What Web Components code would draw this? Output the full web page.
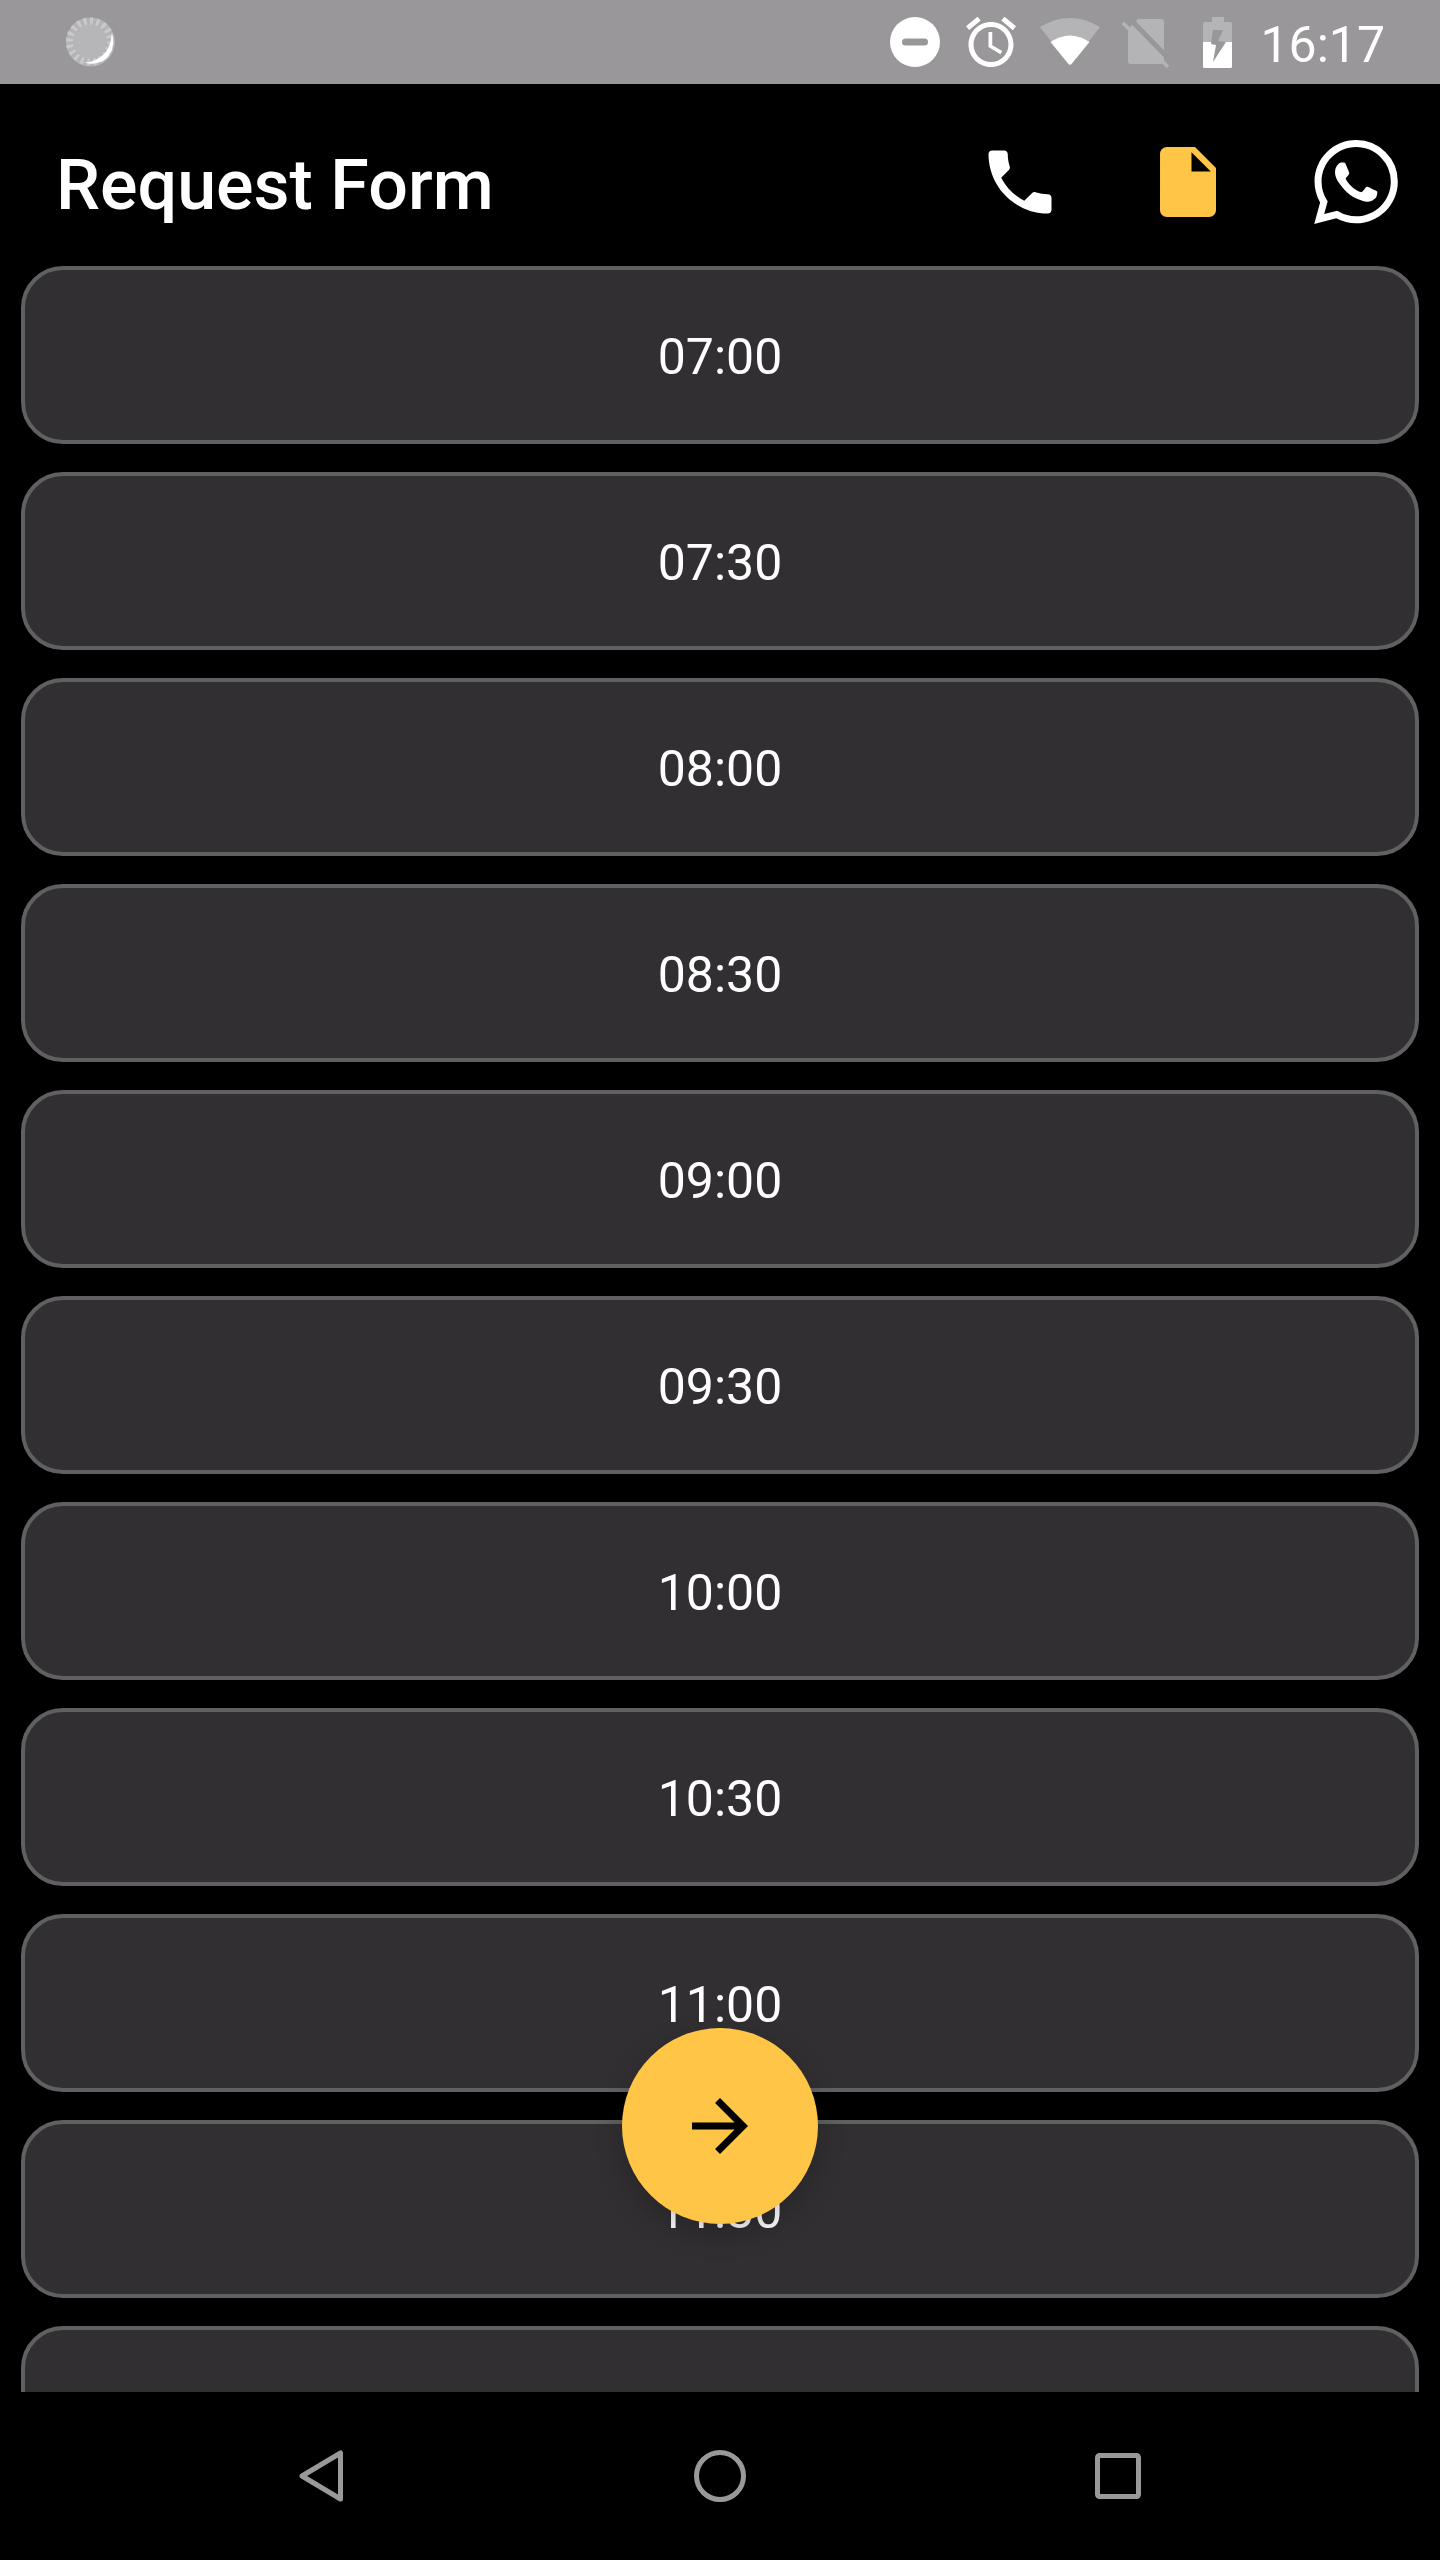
<!DOCTYPE html>
<html lang="en">
<head>
<meta charset="utf-8">
<title>Request Form</title>
<style>
html, body { margin: 0; background: #000; }
body { font-family: Roboto, "Liberation Sans", sans-serif; color: #fff; }
</style>
</head>
<body>
<request-form-screen>
  <status-strip slot="status" time="16:17"></status-strip>
  <form-header slot="header" label="Request Form">
    <header-action icon="phone" color="#fff"></header-action>
    <header-action icon="file" color="#ffc547"></header-action>
    <header-action icon="whatsapp" color="#fff"></header-action>
  </form-header>
  <time-list slot="list">
    <time-option>07:00</time-option>
    <time-option>07:30</time-option>
    <time-option>08:00</time-option>
    <time-option>08:30</time-option>
    <time-option>09:00</time-option>
    <time-option>09:30</time-option>
    <time-option>10:00</time-option>
    <time-option>10:30</time-option>
    <time-option>11:00</time-option>
    <time-option>11:30</time-option>
    <!-- next row: only its top edge is on screen, label is below the fold -->
    <time-option></time-option>
  </time-list>
  <next-fab slot="fab"></next-fab>
  <system-nav slot="nav"></system-nav>
</request-form-screen>

<script>
const ICONS = {
  phone: '<path d="M6.62 10.79c1.44 2.83 3.76 5.14 6.59 6.59l2.2-2.2c.27-.27.67-.36 1.02-.24 1.12.37 2.33.57 3.57.57.55 0 1 .45 1 1V20c0 .55-.45 1-1 1-9.39 0-17-7.61-17-17 0-.55.45-1 1-1h3.5c.55 0 1 .45 1 1 0 1.25.2 2.45.57 3.57.11.35.03.74-.25 1.02l-2.2 2.2z"/>',
  file: '<path d="M6 2c-1.1 0-1.99.9-1.99 2L4 20c0 1.1.89 2 1.99 2H18c1.1 0 2-.9 2-2V8l-6-6H6zm7 7V3.5L18.5 9H13z"/>',
  whatsapp: '<path d="M17.472 14.382c-.297-.149-1.758-.867-2.03-.967-.273-.099-.471-.148-.67.15-.197.297-.767.966-.94 1.164-.173.199-.347.223-.644.075-.297-.15-1.255-.463-2.39-1.475-.883-.788-1.48-1.761-1.653-2.059-.173-.297-.018-.458.13-.606.134-.133.298-.347.446-.52.149-.174.198-.298.298-.497.099-.198.05-.371-.025-.52-.075-.149-.669-1.612-.916-2.207-.242-.579-.487-.5-.669-.51-.173-.008-.371-.01-.57-.01-.198 0-.52.074-.792.372-.272.297-1.04 1.016-1.04 2.479 0 1.462 1.065 2.875 1.213 3.074.149.198 2.096 3.2 5.077 4.487.709.306 1.262.489 1.694.625.712.227 1.36.195 1.871.118.571-.085 1.758-.719 2.006-1.413.248-.694.248-1.289.173-1.413-.074-.124-.272-.198-.57-.347m-5.421 7.403h-.004a9.87 9.87 0 01-5.031-1.378l-.361-.214-3.741.982.998-3.648-.235-.374a9.86 9.86 0 01-1.51-5.26c.001-5.45 4.436-9.884 9.888-9.884 2.64 0 5.122 1.03 6.988 2.898a9.825 9.825 0 012.893 6.994c-.003 5.45-4.437 9.884-9.885 9.884m8.413-18.297A11.815 11.815 0 0012.05 0C5.495 0 .16 5.335.157 11.892c0 2.096.547 4.142 1.588 5.945L.057 24l6.305-1.654a11.882 11.882 0 005.683 1.448h.005c6.554 0 11.89-5.335 11.893-11.893a11.821 11.821 0 00-3.48-8.413z"/>'
};

function shadow (host, html) {
  const root = host.attachShadow({mode: 'open'});
  root.innerHTML = html;
  return root;
}

class RequestFormScreen extends HTMLElement {
  constructor () {
    super();
    shadow(this, `
<style>
:host { display: flex; flex-direction: column; position: relative; width: 1440px; height: 2560px; overflow: hidden; background: #000; }
</style>
<slot name="status"></slot>
<slot name="header"></slot>
<slot name="list"></slot>
<slot name="nav"></slot>
<slot name="fab"></slot>`);
  }
}

class StatusStrip extends HTMLElement {
  constructor () {
    super();
    shadow(this, `
<style>
:host { display: flex; align-items: center; height: 84px; padding: 0 55px 0 66px; background: #999799; color: #fff; font: 400 50px Roboto, sans-serif; }
svg { display: block; flex: none; overflow: visible; }
.right { display: flex; align-items: center; margin-left: auto; }
.alarm { margin-left: 21px; }
.wifi { margin-left: 19px; }
.sim { margin-left: 23px; }
.battery { margin-left: 35px; }
.time { margin-left: 28px; padding-top: 7px; line-height: 77px; }
</style>
<svg width="50" height="50" viewBox="0 0 50 50">
  <circle cx="24.500" cy="25" r="24.500" fill="#b4b3b5"/>
  <circle cx="24" cy="24.500" r="20.500" fill="none" stroke="#c9c8ca" stroke-width="7" stroke-dasharray="3 3.400"/>
  <circle cx="24" cy="24.500" r="16.500" fill="#b6b5b7"/>
  <path d="M45.700 16.300C49 25 47 34 40.700 41.300C34 47 25 48 17.300 45.300C25 46 34 42 40 34.700C44 29 45.500 23 45.700 16.300z" fill="#fff"/>
</svg>
<div class="right">
  <svg width="50" height="50" viewBox="0 0 50 50">
    <circle cx="25" cy="25" r="25" fill="#fff"/>
    <rect x="12" y="21.500" width="26" height="7" rx="3.500" fill="#999799"/>
  </svg>
  <svg class="alarm" width="60" height="60" viewBox="0 0 24 24" fill="#fff"><path d="M22 5.720l-4.600-3.860-1.290 1.530 4.600 3.860L22 5.720zM7.880 3.390L6.600 1.860 2 5.710l1.290 1.530 4.590-3.850zM12.500 8H11v6l4.750 2.850.75-1.230-4-2.370V8zM12 4c-4.970 0-9 4.030-9 9s4.020 9 9 9c4.970 0 9-4.030 9-9s-4.030-9-9-9zm0 16c-3.870 0-7-3.130-7-7s3.130-7 7-7 7 3.130 7 7-3.130 7-7 7z"/></svg>
  <svg class="wifi" width="60" height="48" viewBox="0 0 60 48">
    <path d="M0 9Q30-9 60 9L31.500 46Q30 47.500 28.500 46z" fill="#b4b3b5"/>
    <path d="M10.500 24Q30 11 49.500 24L31.500 46Q30 47.500 28.500 46z" fill="#fff"/>
  </svg>
  <svg class="sim" width="45" height="50" viewBox="0 0 45 50">
    <path d="M15 2H38Q41 2 41 5V44Q41 47 38 47H8Q5 47 5 44V12z" fill="#b4b3b5"/>
    <path d="M6 1L48 44" stroke="#979698" stroke-width="5"/>
    <path d="M0 6L45 50" stroke="#b4b3b5" stroke-width="3.500"/>
  </svg>
  <svg class="battery" width="29" height="51" viewBox="0 0 29 51">
    <path d="M9 0H21V5H27.500Q29 5 29 6.500V25H0V6.500Q0 5 1.500 5H9z" fill="#b4b3b5"/>
    <path d="M0 25H29V49.500Q29 51 27.500 51H1.500Q0 51 0 49.500z" fill="#fff"/>
    <path d="M10 13H20L15 24L23 25L10 45L13 28L8 27z" fill="#999799"/>
  </svg>
  <span class="time"></span>
</div>`);
    this.shadowRoot.querySelector('.time').textContent = this.getAttribute('time');
  }
}

class FormHeader extends HTMLElement {
  constructor () {
    super();
    shadow(this, `
<style>
:host { display: flex; align-items: center; box-sizing: border-box; height: 182px; padding: 14px 0 0 56px; }
h1 { flex: 1; margin: 6px 0 0; font: 500 70px Roboto, sans-serif; color: #fff; }
.actions { display: flex; }
</style>
<h1></h1>
<div class="actions"><slot></slot></div>`);
    this.shadowRoot.querySelector('h1').textContent = this.getAttribute('label');
  }
}

class HeaderAction extends HTMLElement {
  constructor () {
    super();
    shadow(this, `
<style>
:host { display: flex; align-items: center; justify-content: center; width: 168px; height: 168px; }
svg { display: block; width: 84px; height: 84px; }
</style>
<svg viewBox="0 0 24 24" fill="${this.getAttribute('color')}">${ICONS[this.getAttribute('icon')]}</svg>`);
  }
}

class TimeList extends HTMLElement {
  constructor () {
    super();
    shadow(this, `
<style>
:host { display: flex; flex-direction: column; gap: 28px; box-sizing: border-box; height: 2126px; padding: 0 21px; overflow: hidden; }
::slotted(*) { flex: none; }
</style>
<slot></slot>`);
  }
}

class TimeOption extends HTMLElement {
  constructor () {
    super();
    shadow(this, `
<style>
:host { display: flex; align-items: center; justify-content: center; box-sizing: border-box; height: 178px; padding-top: 4px; border: 4px solid #605f61; border-radius: 42px; background: #312f32; color: #fff; font: 400 50px Roboto, sans-serif; }
</style>
<slot></slot>`);
  }
}

class NextFab extends HTMLElement {
  constructor () {
    super();
    shadow(this, `
<style>
:host { display: flex; align-items: center; justify-content: center; position: absolute; left: 622px; top: 2028px; width: 196px; height: 196px; border-radius: 50%; background: #ffc547; box-shadow: 0 10px 28px rgba(0,0,0,.22); }
svg { display: block; width: 84px; height: 84px; }
</style>
<svg viewBox="0 0 24 24" fill="#000"><path d="M12 4l-1.410 1.410L16.170 11H4v2h12.170l-5.580 5.590L12 20l8-8z"/></svg>`);
  }
}

class SystemNav extends HTMLElement {
  constructor () {
    super();
    shadow(this, `
<style>
:host { display: flex; align-items: center; flex: 1; padding-left: 299px; background: #000; }
svg { display: block; flex: none; fill: none; stroke: #999; stroke-width: 5; stroke-linejoin: round; }
.home { margin-left: 351px; }
.recent { margin-left: 349px; }
</style>
<svg width="44" height="52" viewBox="0 0 44 52"><path d="M41.500 3V49L3 26z"/></svg>
<svg class="home" width="52" height="52" viewBox="0 0 52 52"><circle cx="26" cy="26" r="23.500"/></svg>
<svg class="recent" width="46" height="46" viewBox="0 0 46 46"><rect x="2.500" y="2.500" width="41" height="41" rx="2"/></svg>`);
  }
}

customElements.define('request-form-screen', RequestFormScreen);
customElements.define('status-strip', StatusStrip);
customElements.define('form-header', FormHeader);
customElements.define('header-action', HeaderAction);
customElements.define('time-list', TimeList);
customElements.define('time-option', TimeOption);
customElements.define('next-fab', NextFab);
customElements.define('system-nav', SystemNav);
</script>
</body>
</html>
